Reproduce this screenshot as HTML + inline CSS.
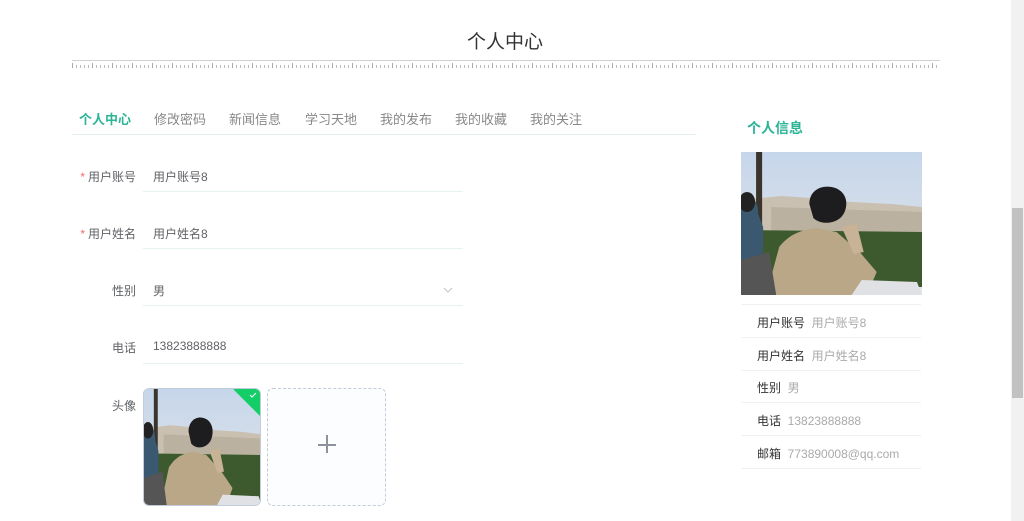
<!DOCTYPE html>
<html><head><meta charset="utf-8"><style>
*{margin:0;padding:0;box-sizing:border-box}
body{width:1024px;height:521px;overflow:hidden;background:#fff;font-family:"Liberation Sans","Noto Sans CJK SC",sans-serif;position:relative;color:#606266}
.abs{position:absolute}
.title{left:0;width:1010px;top:27px;text-align:center;font-size:19px;color:#333}
.line{left:72px;width:868px;top:60px;height:1px;background:#d0d0d0}
.ruler{left:72px;width:868px;top:65px;height:3px;background:repeating-linear-gradient(90deg,#bbb 0 1px,transparent 1px 4px)}
.ruler2{left:72px;width:868px;top:63px;height:5px;background:repeating-linear-gradient(90deg,#aaa 0 1px,transparent 1px 20px)}
.tabs{left:72px;top:109px;width:624px;height:26px;border-bottom:1px solid #e4f0ee;font-size:13px;color:#888}
.tabs span{position:absolute;top:0}
.lbl{font-size:12px;color:#606266;text-align:right;width:64px;left:72px}
.lbl i{color:#f56c6c;font-style:normal;margin-right:3px}
.inp{left:143px;width:320px;height:1px;background:#e6f2ef}
.val{left:153px;font-size:12px;color:#606266}
.row{left:741px;width:180px;height:1px;background:#eef3f2}
.sk{font-size:12px;color:#333;left:757px}
.sv{color:#aaa}
.sb{left:1011px;top:0;width:13px;height:521px;background:#f1f1f1}
.thumb{left:1012px;top:208px;width:11px;height:190px;background:#c1c1c1}
</style></head><body>
<svg width="0" height="0" style="position:absolute"><defs>
<linearGradient id="sky" x1="0" y1="0" x2="0" y2="1"><stop offset="0" stop-color="#c6d6ea"/><stop offset="1" stop-color="#e4e6ea"/></linearGradient>
<symbol id="ph" viewBox="0 0 180 143" preserveAspectRatio="none">
<rect width="180" height="143" fill="url(#sky)"/>
<path d="M0 48 L40 44 L70 46 L110 50 L150 52 L180 55 L180 85 L0 85Z" fill="#c9c0b2"/>
<path d="M30 55 L180 60 L180 80 L30 80Z" fill="#b2a795" opacity=".6"/>
<path d="M0 78 L180 80 L180 135 L0 135Z" fill="#3d5a2e"/>
<rect x="15" y="0" width="6" height="110" fill="#3b342c"/>
<path d="M0 45 C10 40 18 50 17 62 L22 75 L22 105 L0 108Z" fill="#3a5870"/>
<ellipse cx="6" cy="50" rx="8" ry="10" fill="#222"/>
<path d="M68 52 C68 38 80 33 90 35 C102 37 108 48 103 60 C98 72 80 74 72 66Z" fill="#1d1c1e"/>
<path d="M25 143 L38 95 C48 82 60 78 75 76 L95 80 L118 100 L135 120 L125 143Z" fill="#b9a788"/>
<path d="M100 75 L115 72 L122 100 L112 102Z" fill="#c8b396"/>
<path d="M120 128 L175 130 L180 143 L110 143Z" fill="#dfe1e4"/>
<path d="M0 108 L28 100 L35 143 L0 143Z" fill="#555"/>
</symbol></defs></svg>

<div class="abs title">个人中心</div>
<div class="abs line"></div>
<div class="abs ruler"></div>
<div class="abs ruler2"></div>

<div class="abs tabs">
<span style="left:7px;color:#2bb496;font-weight:bold">个人中心</span>
<span style="left:82px">修改密码</span>
<span style="left:157px">新闻信息</span>
<span style="left:233px">学习天地</span>
<span style="left:308px">我的发布</span>
<span style="left:383px">我的收藏</span>
<span style="left:458px">我的关注</span>
</div>

<div class="abs lbl" style="top:168px"><i>*</i>用户账号</div>
<div class="abs val" style="top:168px">用户账号8</div>
<div class="abs inp" style="top:191px"></div>
<div class="abs lbl" style="top:225px"><i>*</i>用户姓名</div>
<div class="abs val" style="top:225px">用户姓名8</div>
<div class="abs inp" style="top:248px"></div>
<div class="abs lbl" style="top:282px">性别</div>
<div class="abs val" style="top:282px">男</div>
<svg class="abs" style="left:443px;top:287px" width="10" height="6"><path d="M1 1 L5 5 L9 1" stroke="#c0c4cc" fill="none"/></svg>
<div class="abs inp" style="top:305px"></div>
<div class="abs lbl" style="top:339px">电话</div>
<div class="abs val" style="top:339px">13823888888</div>
<div class="abs inp" style="top:363px"></div>
<div class="abs lbl" style="top:397px">头像</div>

<div class="abs" style="left:143px;top:388px;width:118px;height:118px;border-radius:6px;overflow:hidden;border:1px solid #c0ccda">
<svg width="118" height="118"><use href="#ph" width="118" height="118"/></svg>
<div class="abs" style="right:-16px;top:-6px;width:40px;height:24px;background:#13ce66;transform:rotate(45deg)"></div>
<svg class="abs" style="right:3px;top:3px" width="8" height="6"><path d="M1 3 L3 5 L7 1" stroke="#fff" fill="none"/></svg>
</div>
<div class="abs" style="left:267px;top:388px;width:119px;height:118px;border-radius:6px;border:1px dashed #c0ccda;background:#fbfdff">
<div class="abs" style="left:50px;top:55px;width:18px;height:1.5px;background:#8c939d"></div>
<div class="abs" style="left:58px;top:46px;width:1.5px;height:18px;background:#8c939d"></div>
</div>

<div class="abs" style="left:747px;top:118px;font-size:14px;font-weight:bold;color:#2bb496">个人信息</div>
<div class="abs" style="left:741px;top:152px;width:181px;height:143px;overflow:hidden">
<svg width="181" height="143"><use href="#ph" width="181" height="143"/></svg></div>
<div class="abs row" style="top:304px"></div>
<div class="abs sk" style="top:314px">用户账号 <span class="sv">&nbsp;用户账号8</span></div>
<div class="abs row" style="top:337px"></div>
<div class="abs sk" style="top:347px">用户姓名 <span class="sv">&nbsp;用户姓名8</span></div>
<div class="abs row" style="top:370px"></div>
<div class="abs sk" style="top:379px">性别 <span class="sv">&nbsp;男</span></div>
<div class="abs row" style="top:402px"></div>
<div class="abs sk" style="top:412px">电话 <span class="sv">&nbsp;13823888888</span></div>
<div class="abs row" style="top:435px"></div>
<div class="abs sk" style="top:445px">邮箱 <span class="sv">&nbsp;773890008@qq.com</span></div>
<div class="abs row" style="top:468px"></div>

<div class="abs sb"></div>
<div class="abs thumb"></div>
</body></html>
